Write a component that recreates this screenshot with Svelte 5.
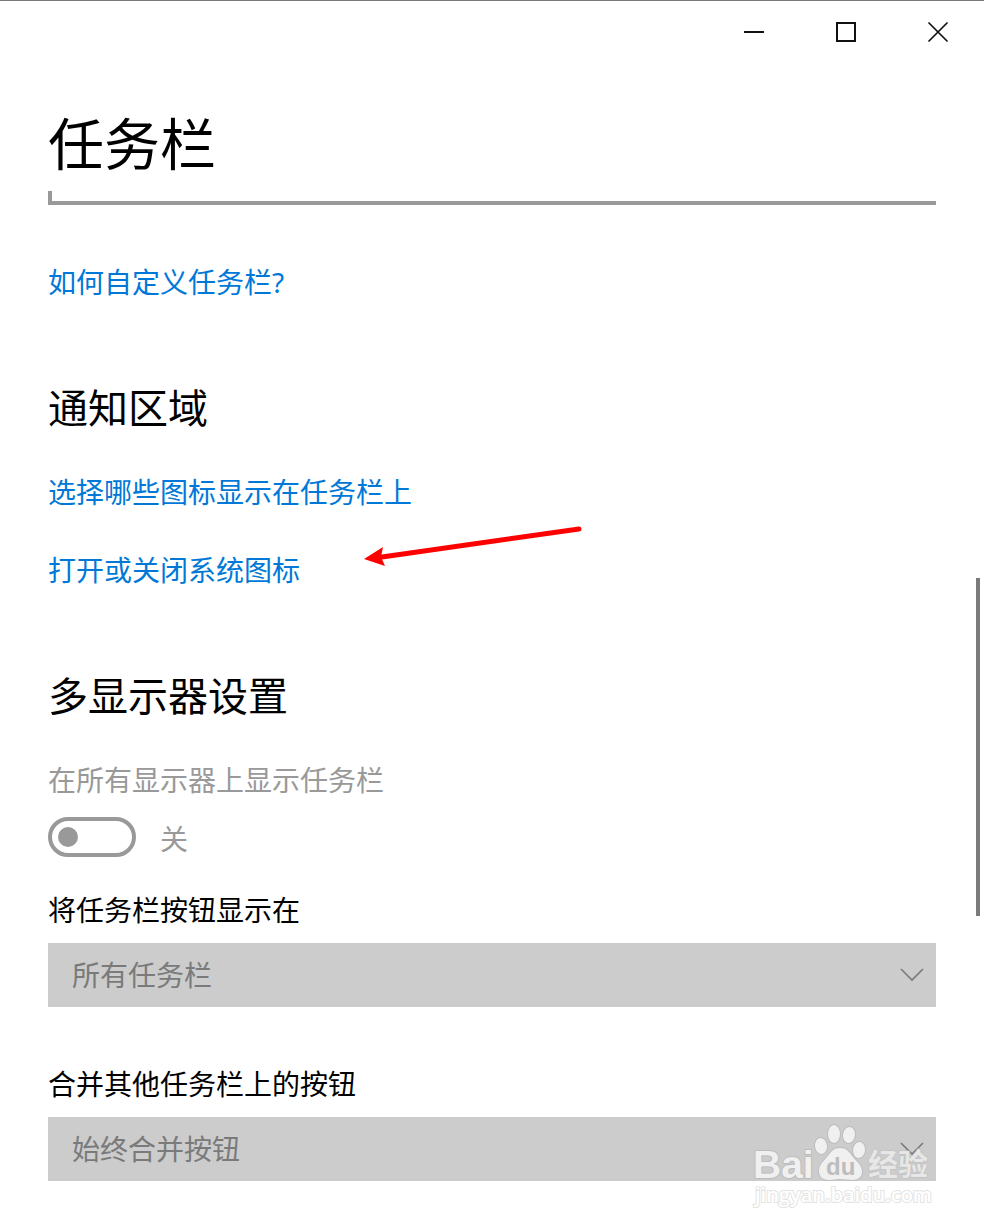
<script lang="ts">
	interface Field {
		id: string;
		label: string;
		value: string;
	}

	const fields: Field[] = [
		{ id: 'show-on', label: '将任务栏按钮显示在', value: '所有任务栏' },
		{ id: 'combine', label: '合并其他任务栏上的按钮', value: '始终合并按钮' }
	];

	let allDisplays = $state(false);
</script>

<div class="window">
	<header class="titlebar">
		<button aria-label="最小化">
			<svg width="20" height="20" viewBox="0 0 20 20"><path d="M0 10H20" /></svg>
		</button>
		<button aria-label="最大化">
			<svg width="20" height="20" viewBox="0 0 20 20"><path d="M1 1H19V19H1Z" /></svg>
		</button>
		<button aria-label="关闭">
			<svg width="20" height="20" viewBox="0 0 20 20"><path class="thin" d="M1 1L19 19M19 1L1 19" /></svg>
		</button>
	</header>

	<main>
		<h1>任务栏</h1>
		<div class="rule"></div>

		<a href="#help">如何自定义任务栏?</a>

		<section>
			<h2>通知区域</h2>
			<div class="links">
				<a href="#icons">选择哪些图标显示在任务栏上</a>
				<div class="pointed">
					<a href="#system-icons">打开或关闭系统图标</a>
					<svg class="arrow" width="220" height="44" viewBox="0 0 220 44" aria-hidden="true">
						<path class="shaft" d="M18 32L215 4" />
						<path class="head" d="M0 34L19 22L17 32L21 41Z" />
					</svg>
				</div>
			</div>
		</section>

		<section>
			<h2>多显示器设置</h2>
			<label class="muted" for="all-displays">在所有显示器上显示任务栏</label>
			<div class="switch">
				<input id="all-displays" type="checkbox" role="switch" bind:checked={allDisplays} disabled />
				<span class="muted">{allDisplays ? '开' : '关'}</span>
			</div>

			<div class="fields">
				{#each fields as field (field.id)}
					<div class="field">
						<label for={field.id}>{field.label}</label>
						<div class="select">
							<select id={field.id} disabled>
								<option>{field.value}</option>
							</select>
							<svg class="chevron" width="24" height="14" viewBox="0 0 24 14" aria-hidden="true">
								<path d="M1 1L12 12L23 1" />
							</svg>
						</div>
					</div>
				{/each}

				<svg class="watermark" width="190" height="92" viewBox="0 0 190 92">
					<g class="mark">
						<text class="bai" x="3" y="59">Bai</text>
						<ellipse cx="71" cy="27" rx="6" ry="8" transform="rotate(-8 71 27)" />
						<ellipse cx="84" cy="15" rx="6" ry="9" />
						<ellipse cx="99" cy="16" rx="6" ry="8" transform="rotate(8 99 16)" />
						<ellipse cx="109" cy="31" rx="6" ry="8" transform="rotate(6 109 31)" />
						<path d="M90 29C97 29 100 34 103 38C107 43 112 46 112 53C112 58 108 61 102 61C97 61 95 60 90 60C85 60 83 61 79 61C72 61 69 57 69 52C69 46 73 43 77 38C80 34 83 29 90 29Z" />
						<text class="jingyan" x="118" y="56">经验</text>
					</g>
					<text class="du" x="76" y="56">du</text>
					<text class="site" x="5" y="83">jingyan.baidu.com</text>
				</svg>
			</div>
		</section>
	</main>

	<div class="scrollbar"></div>
</div>

<style>
	:global(body) {
		background: #fff;
	}

	.window {
		position: relative;
		box-sizing: border-box;
		min-height: 100vh;
		overflow: hidden;
		border-top: 1px solid #7a7a7a;
		font-family: 'Noto Sans', 'Noto Sans CJK SC', sans-serif;
		font-weight: 400;
		font-size: 28px;
		line-height: 40px;
		color: #000;
	}

	.titlebar {
		display: flex;
		justify-content: flex-end;
	}

	.titlebar button {
		display: flex;
		align-items: center;
		justify-content: center;
		width: 92px;
		height: 62px;
		padding: 0;
		border: none;
		background: none;
	}

	.titlebar path {
		fill: none;
		stroke: #111;
		stroke-width: 2;
	}

	.titlebar .thin {
		stroke-width: 1.7;
		stroke-linecap: round;
	}

	main {
		padding: 48px 48px;
	}

	h1,
	h2 {
		margin: 0;
		font-weight: 400;
	}

	h1 {
		font-size: 56px;
		line-height: 64px;
	}

	h2 {
		font-size: 40px;
		line-height: 56px;
		margin-bottom: 36px;
	}

	.rule {
		height: 10px;
		margin: 16px 0 57px;
		border-left: 4px solid #999;
		border-bottom: 4px solid #999;
	}

	a,
	label {
		display: block;
	}

	a {
		width: fit-content;
		color: #0078d7;
		text-decoration: none;
	}

	section {
		margin-top: 78px;
	}

	.links {
		display: flex;
		flex-direction: column;
		gap: 38px;
	}

	.pointed {
		position: relative;
	}

	.arrow {
		position: absolute;
		left: 316px;
		top: -25px;
	}

	.shaft {
		fill: none;
		stroke: #f00;
		stroke-width: 5;
		stroke-linecap: round;
	}

	.head {
		fill: #f00;
	}

	.muted {
		color: #999;
	}

	.switch {
		display: flex;
		align-items: center;
		gap: 24px;
		margin: 17px 0 33px;
	}

	.switch span {
		padding-top: 2px;
		margin-bottom: -2px;
	}

	.switch input {
		appearance: none;
		display: flex;
		align-items: center;
		box-sizing: border-box;
		width: 88px;
		height: 40px;
		margin: 0;
		padding: 0 6px;
		border: 4px solid #999;
		border-radius: 20px;
	}

	.switch input::before {
		content: '';
		width: 20px;
		height: 20px;
		border-radius: 50%;
		background: #999;
	}

	.switch input:checked {
		justify-content: flex-end;
	}

	.fields {
		position: relative;
		display: flex;
		flex-direction: column;
		gap: 57px;
	}

	.field label {
		margin-bottom: 13px;
	}

	.select {
		position: relative;
	}

	select {
		appearance: none;
		display: block;
		width: 100%;
		height: 64px;
		padding: 0 24px;
		border: none;
		border-radius: 0;
		background: #ccc;
		color: #7a7a7a;
		font: inherit;
		opacity: 1;
	}

	.chevron {
		position: absolute;
		right: 12px;
		top: 25px;
		fill: none;
		stroke: #7a7a7a;
		stroke-width: 1.6;
	}

	.watermark {
		position: absolute;
		right: -4px;
		bottom: -30px;
		font-weight: 700;
	}

	.mark {
		fill: #f0f0f0;
		stroke: #bdbdbd;
		stroke-width: 2;
		stroke-linejoin: round;
		paint-order: stroke;
	}

	.bai,
	.du {
		font-family: 'Liberation Sans', sans-serif;
	}

	.bai {
		font-size: 39px;
	}

	.du {
		font-size: 24px;
		fill: #bdbdbd;
	}

	.jingyan {
		font-family: 'Noto Sans CJK SC', sans-serif;
		font-size: 30px;
		fill-opacity: 0.8;
		stroke-opacity: 0.5;
	}

	.site {
		font-family: 'Open Sans', sans-serif;
		font-size: 20px;
		font-weight: 600;
		fill: #fff;
		stroke: #e4e4e4;
		stroke-width: 2;
		paint-order: stroke;
	}

	.scrollbar {
		position: absolute;
		right: 4px;
		top: 47%;
		width: 4px;
		height: 338px;
		background: #7a7a7a;
	}
</style>
